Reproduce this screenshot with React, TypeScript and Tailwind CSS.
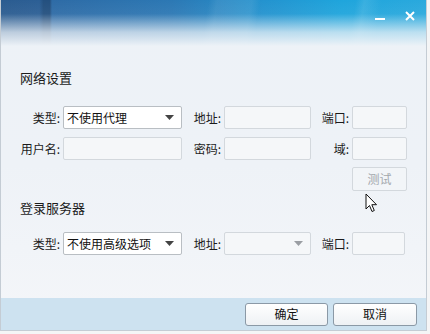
import React from "react";

const font = { fontFamily: '"Noto Sans CJK SC", "Noto Sans", sans-serif' };

function Label({ w, children }: { w: string; children: React.ReactNode }) {
  return <div className={`${w} shrink-0 text-[12px] text-[#1b1b1b] leading-none text-right`}>{children}</div>;
}

function Input({ w }: { w: string }) {
  return <div className={`${w} h-[23px] shrink-0 rounded-[2px] border border-[#d3d8dd] bg-[#f5f7f9]`} />;
}

function Select({ text, w, disabled }: { text: string; w: string; disabled?: boolean }) {
  return (
    <div
      className={`${w} h-[23px] shrink-0 rounded-[2px] border flex items-center pl-[3px] pr-[7px] ${
        disabled ? "border-[#d3d8dd] bg-[#f5f7f9]" : "border-[#b9bec3] bg-white"
      }`}
    >
      <span className="flex-1 text-[12px] text-[#111] leading-none">{text}</span>
      <svg width="9" height="5" viewBox="0 0 9 5">
        <path d="M0 0 L9 0 L4.5 5 Z" fill={disabled ? "#9a9ea3" : "#444"} />
      </svg>
    </div>
  );
}

export default function App() {
  return (
    <div className="w-[430px] h-[334px] bg-[#f4f5f6] relative overflow-hidden" style={font}>
      <div className="w-[427px] h-[331px] flex flex-col border-l border-r border-b border-[#c4ccd4] bg-[linear-gradient(to_bottom,#edf2f7_0%,#eef2f7_50%,#f4f6f9_100%)] relative">
        {/* header */}
        <div className="h-[46px] shrink-0 flex items-start justify-end gap-[18px] pr-[10px] pt-[9px] bg-[linear-gradient(to_bottom,rgba(237,242,247,0)_0%,rgba(237,242,247,0.05)_30%,rgba(237,242,247,0.75)_70%,#edf2f7_100%),linear-gradient(100deg,rgba(255,255,255,0)_0%,rgba(255,255,255,0)_48%,rgba(255,255,255,0.08)_50%,rgba(255,255,255,0.08)_58%,rgba(255,255,255,0)_60%,rgba(255,255,255,0)_82%,rgba(255,255,255,0.1)_84%,rgba(255,255,255,0)_88%),linear-gradient(90deg,#2b5c90_0%,#2c5f95_9%,#24507f_10%,#24507f_11.5%,#2e6ba6_12%,#2c78b4_40%,#2393cf_62%,#1fa5dc_80%,#2aa9dd_100%)]">
          <svg width="12" height="12" viewBox="0 0 12 12" className="mt-[2px]">
            <rect x="1" y="7" width="10" height="2" fill="#fff" />
          </svg>
          <svg width="12" height="12" viewBox="0 0 12 12" className="mt-[1px]">
            <path d="M2 2 L10 10 M10 2 L2 10" stroke="#fff" strokeWidth="2" />
          </svg>
        </div>

        {/* body */}
        <div className="flex-1 flex flex-col pl-[19px]">
          <div className="text-[13px] text-[#1b1b1b] leading-none mt-[25px]">网络设置</div>

          <div className="flex items-center mt-[22px] h-[23px]">
            <Label w="w-[40px]">类型:</Label>
            <div className="w-[3px]" />
            <Select text="不使用代理" w="w-[119px]" />
            <div className="w-[11px]" />
            <Label w="w-[28px]">地址:</Label>
            <div className="w-[3px]" />
            <Input w="w-[87px]" />
            <div className="w-[10px]" />
            <Label w="w-[28px]">端口:</Label>
            <div className="w-[3px]" />
            <Input w="w-[55px]" />
          </div>

          <div className="flex items-center mt-[8px] h-[23px]">
            <Label w="w-[40px]">用户名:</Label>
            <div className="w-[3px]" />
            <Input w="w-[119px]" />
            <div className="w-[11px]" />
            <Label w="w-[28px]">密码:</Label>
            <div className="w-[3px]" />
            <Input w="w-[87px]" />
            <div className="w-[10px]" />
            <Label w="w-[28px]">域:</Label>
            <div className="w-[3px]" />
            <Input w="w-[55px]" />
          </div>

          <div className="flex mt-[7px] pl-[332px]">
            <div className="w-[55px] h-[24px] rounded-[2px] border border-[#d3d8dd] bg-[#f2f5f8] flex items-center justify-center text-[12px] text-[#a3a8ad] leading-none">
              测试
            </div>
          </div>

          <div className="text-[13px] text-[#1b1b1b] leading-none mt-[10px]">登录服务器</div>

          <div className="flex items-center mt-[18px] h-[23px]">
            <Label w="w-[40px]">类型:</Label>
            <div className="w-[3px]" />
            <Select text="不使用高级选项" w="w-[119px]" />
            <div className="w-[11px]" />
            <Label w="w-[28px]">地址:</Label>
            <div className="w-[3px]" />
            <Select text="" w="w-[87px]" disabled />
            <div className="w-[10px]" />
            <Label w="w-[28px]">端口:</Label>
            <div className="w-[3px]" />
            <Input w="w-[53px]" />
          </div>
        </div>

        {/* footer */}
        <div className="h-[32px] shrink-0 bg-[#cde2f0] flex items-center justify-end gap-[5px] pr-[9px]">
          <button className="w-[83px] h-[23px] rounded-[3px] border border-[#8b99a6] bg-[linear-gradient(to_bottom,#ffffff,#eef1f4)] text-[12px] text-[#111] leading-none">
            确定
          </button>
          <button className="w-[84px] h-[23px] rounded-[3px] border border-[#8b99a6] bg-[linear-gradient(to_bottom,#ffffff,#eef1f4)] text-[12px] text-[#111] leading-none">
            取消
          </button>
        </div>

        {/* mouse cursor */}
        <svg width="13" height="21" viewBox="0 0 13 21" className="absolute left-[364px] top-[193px]">
          <path d="M1 1 L1 16 L4.5 12.5 L7 18.5 L9.3 17.5 L6.8 11.7 L11.5 11.7 Z" fill="#fff" stroke="#111" strokeWidth="1" strokeLinejoin="round" />
        </svg>
      </div>
    </div>
  );
}
